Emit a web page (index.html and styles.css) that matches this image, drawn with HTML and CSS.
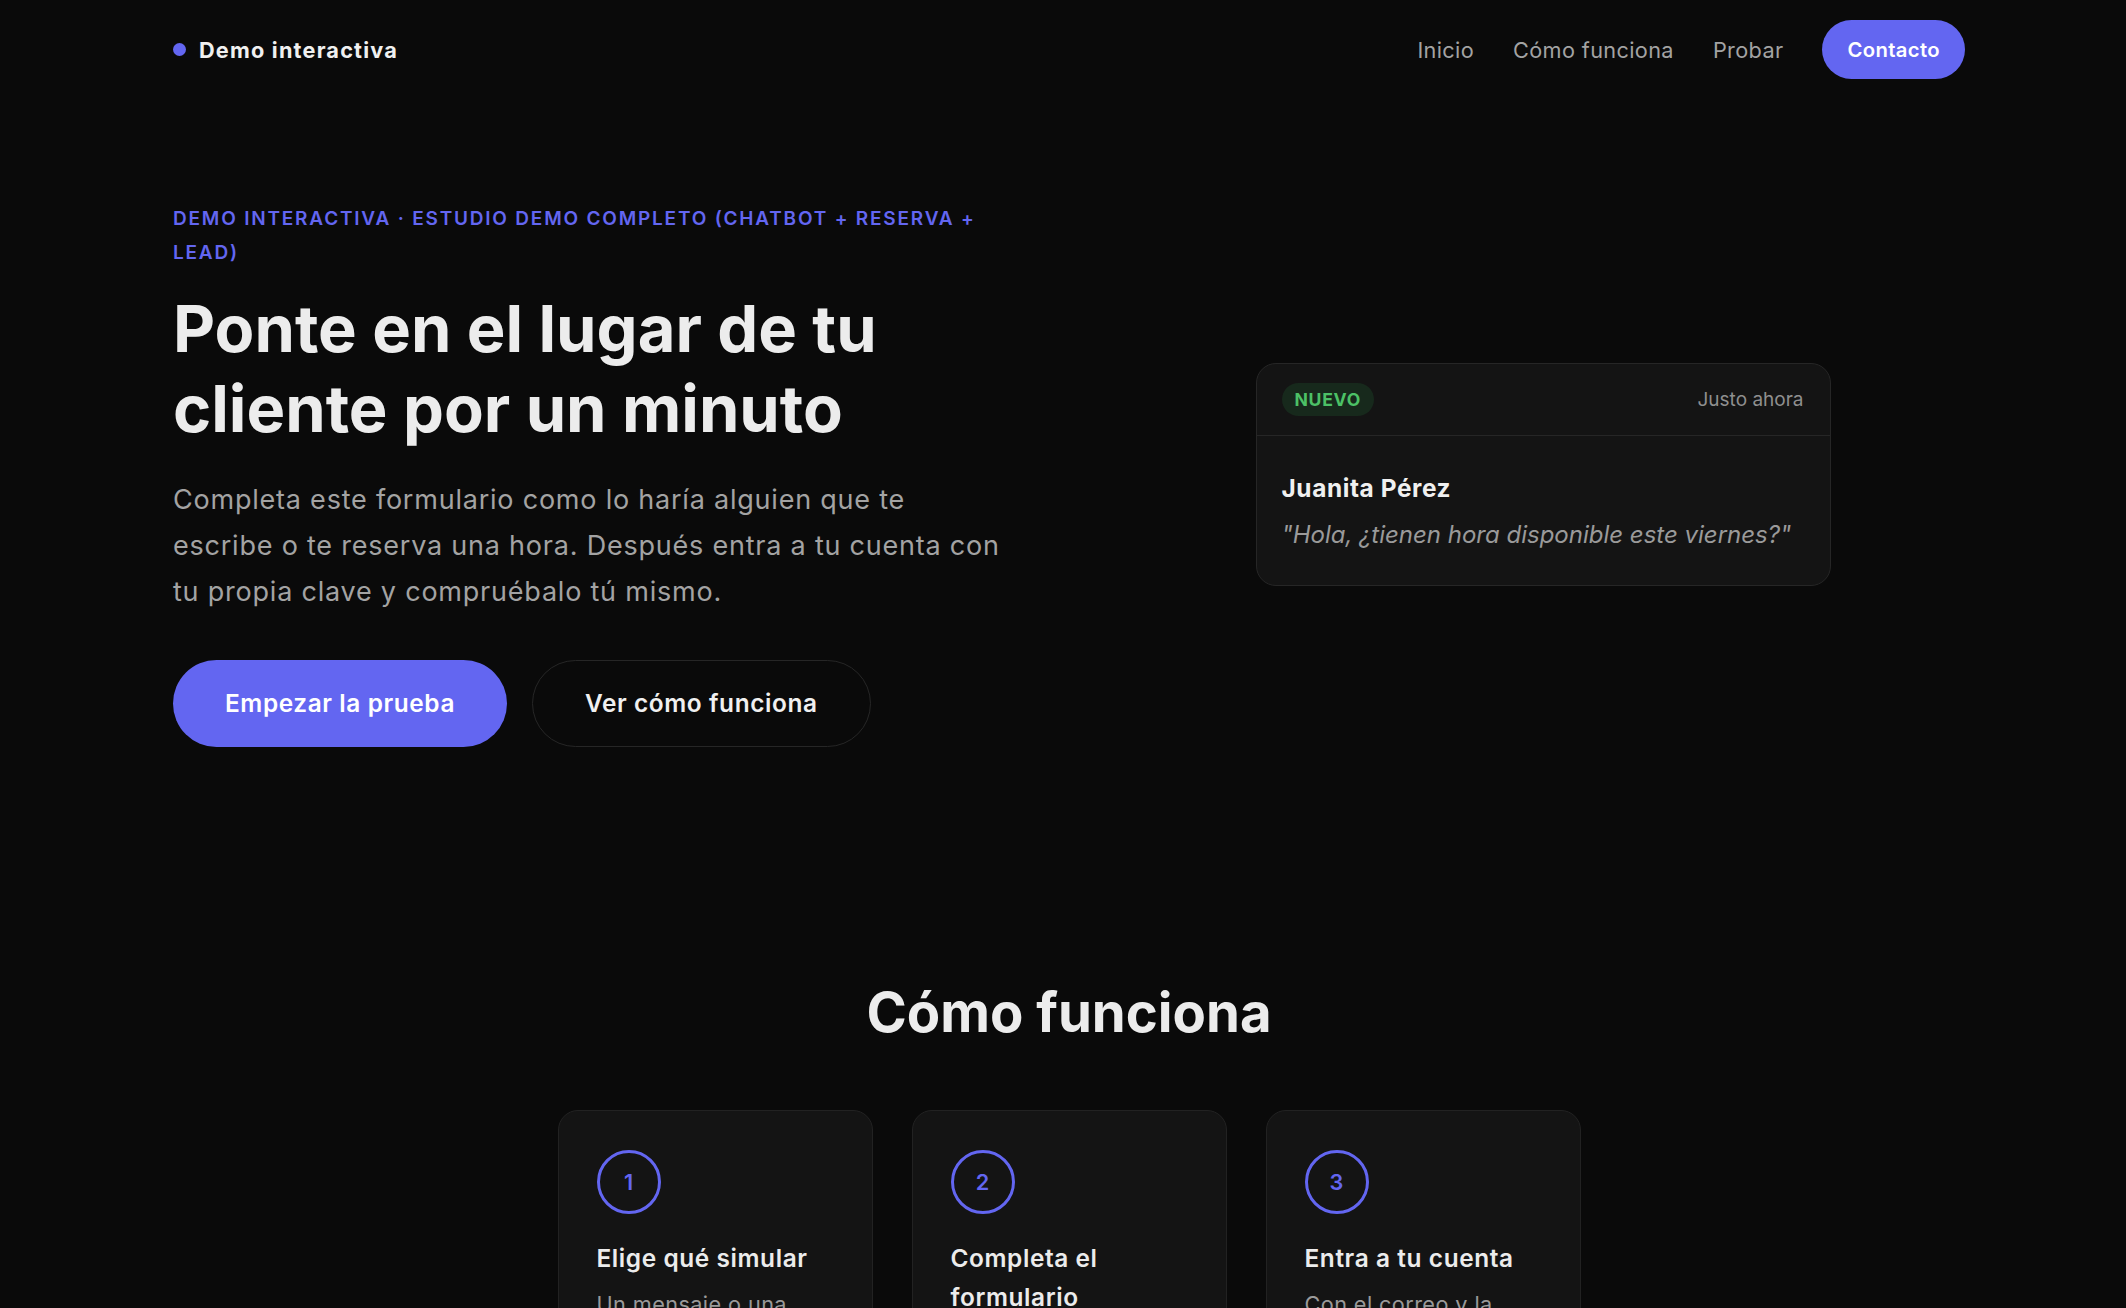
FILE: index.html
```html
<!DOCTYPE html>
<html lang="es">
<head>
  <meta charset="UTF-8">
  <title>Demo interactiva</title>
  <meta name="viewport" content="width=device-width, initial-scale=1.0">
  <link rel="stylesheet" href="styles.css">
</head>
<body>

  <header class="nav">
    <div class="container nav-inner">
      <a class="brand" href="#inicio"><span class="brand-dot"></span>Demo interactiva</a>
      <nav class="nav-links">
        <a href="#inicio">Inicio</a>
        <a href="#como">Cómo funciona</a>
        <a href="#probar">Probar</a>
        <a class="nav-cta" href="#contacto">Contacto</a>
      </nav>
    </div>
  </header>

  <section class="hero" id="inicio">
    <div class="container hero-grid">
      <div class="hero-text">
        <div class="eyebrow">Demo interactiva · Estudio Demo Completo (Chatbot + Reserva + Lead)</div>
        <h1>Ponte en el lugar de tu cliente por un minuto</h1>
        <p class="lead">Completa este formulario como lo haría alguien que te escribe o te reserva una hora. Después entra a tu cuenta con tu propia clave y compruébalo tú mismo.</p>
        <div class="hero-actions">
          <a class="btn btn-primary" href="#probar">Empezar la prueba</a>
          <a class="btn btn-ghost" href="#como">Ver cómo funciona</a>
        </div>
      </div>

      <div class="notif">
        <div class="notif-head">
          <span class="pill">Nuevo</span>
          <span class="notif-time">Justo ahora</span>
        </div>
        <div class="notif-body">
          <div class="notif-name">Juanita Pérez</div>
          <div class="notif-msg">"Hola, ¿tienen hora disponible este viernes?"</div>
        </div>
      </div>
    </div>
  </section>

  <section class="steps" id="como">
    <h2>Cómo funciona</h2>
    <div class="steps-grid">
      <div class="step">
        <div class="step-num">1</div>
        <h3>Elige qué simular</h3>
        <p>Un mensaje o una reserva, como lo haría un cliente real.</p>
      </div>
      <div class="step">
        <div class="step-num">2</div>
        <h3>Completa el formulario</h3>
        <p>Deja tus datos como si fueras un cliente nuevo.</p>
      </div>
      <div class="step">
        <div class="step-num">3</div>
        <h3>Entra a tu cuenta</h3>
        <p>Con el correo y la clave que elegiste, revisa todo.</p>
      </div>
    </div>
  </section>

</body>
</html>
```

FILE: styles.css
```css
body {
  font-family: 'Inter', 'Noto Sans', sans-serif;
  background-color: #0a0a0a;
  color: #ececec;
  margin: 0;
  padding: 0;
}

a {
  text-decoration: none;
  color: inherit;
}

.container {
  width: 1792px;
  margin-left: 173px;
}

/* nav */
.nav {
  padding: 20px 0;
}

.nav-inner {
  display: flex;
  align-items: center;
  justify-content: space-between;
}

.brand {
  display: flex;
  align-items: center;
  gap: 13px;
  font-size: 21.7px;
  font-weight: 700;
  letter-spacing: 1.2px;
  color: #f0f0f0;
}

.brand-dot {
  width: 13px;
  height: 13px;
  border-radius: 50%;
  background: #6366f1;
}

.nav-links {
  display: flex;
  align-items: center;
  gap: 39px;
  font-size: 21.7px;
  letter-spacing: 0.35px;
}

.nav-links a {
  color: #a3a3a3;
}

.nav-links .nav-cta {
  background: #6366f1;
  color: #fff;
  font-size: 20.3px;
  font-weight: 600;
  height: 59px;
  line-height: 59px;
  padding: 0 25px;
  border-radius: 999px;
}

/* hero */
.hero {
  padding-top: 103px;
}

.hero-grid {
  display: grid;
  grid-template-columns: 1fr 1fr;
  gap: 104px;
  align-items: center;
}

.eyebrow {
  color: #6366f1;
  font-size: 19px;
  font-weight: 600;
  line-height: 1.8;
  letter-spacing: 1.8px;
  text-transform: uppercase;
}

.hero h1 {
  font-size: 65px;
  line-height: 80px;
  font-weight: 700;
  letter-spacing: 0;
  margin: 19px 0 0;
  color: #ececec;
}

.lead {
  font-size: 27px;
  line-height: 46px;
  letter-spacing: 0.78px;
  color: #a3a3a3;
  max-width: 836px;
  margin: 28px 0 0;
}

.hero-actions {
  display: flex;
  gap: 25px;
  margin-top: 45px;
}

.btn {
  display: inline-block;
  height: 87px;
  line-height: 87px;
  padding: 0 52px;
  border-radius: 999px;
  font-size: 24.4px;
  font-weight: 600;
  letter-spacing: 0.6px;
  box-sizing: border-box;
}

.btn-primary {
  background: #6366f1;
  color: #fff;
}

.btn-ghost {
  border: 1px solid #262626;
  line-height: 85px;
  color: #f0f0f0;
}

/* notification card */
.notif {
  justify-self: center;
  width: 575px;
  box-sizing: border-box;
  background: #141414;
  border: 1px solid #262626;
  border-radius: 20px;
}

.notif-head {
  display: flex;
  align-items: center;
  justify-content: space-between;
  padding: 19px 26px 19px 25px;
  border-bottom: 1px solid #262626;
}

.pill {
  background: #17291c;
  color: #4cc166;
  font-size: 17.6px;
  font-weight: 700;
  letter-spacing: 0.04em;
  text-transform: uppercase;
  padding: 6px 13px;
  border-radius: 999px;
}

.notif-time {
  color: #8f8f8f;
  font-size: 19px;
}

.notif-body {
  padding: 35px 25px 32px;
}

.notif-name {
  font-size: 24.4px;
  line-height: 34px;
  font-weight: 700;
  letter-spacing: 0.6px;
  color: #f0f0f0;
}

.notif-msg {
  font-size: 24px;
  line-height: 36px;
  font-style: italic;
  color: #9a9a9a;
  margin-top: 12px;
}

/* steps */
.steps {
  margin-top: 233px;
  padding-left: 12px;
}

.steps h2 {
  text-align: center;
  font-size: 54.5px;
  line-height: 1.2;
  font-weight: 700;
  letter-spacing: 0;
  margin: 0;
  color: #ececec;
}

.steps-grid {
  display: grid;
  grid-template-columns: repeat(3, 1fr);
  gap: 39px;
  width: 1023px;
  margin: 64px auto 0;
}

.step {
  background: #141414;
  border: 1px solid #222;
  border-radius: 20px;
  padding: 39px 38px;
}

.step-num {
  width: 64px;
  height: 64px;
  box-sizing: border-box;
  border: 3px solid #6366f1;
  border-radius: 50%;
  display: flex;
  align-items: center;
  justify-content: center;
  color: #6366f1;
  font-size: 21.7px;
  font-weight: 600;
}

.step h3 {
  font-size: 24.4px;
  line-height: 39px;
  font-weight: 600;
  letter-spacing: 0.6px;
  margin: 25px 0 0;
  color: #ececec;
}

.step p {
  font-size: 21.7px;
  line-height: 32.5px;
  letter-spacing: 0.4px;
  color: #9a9a9a;
  margin: 10px 0 0;
}
```
